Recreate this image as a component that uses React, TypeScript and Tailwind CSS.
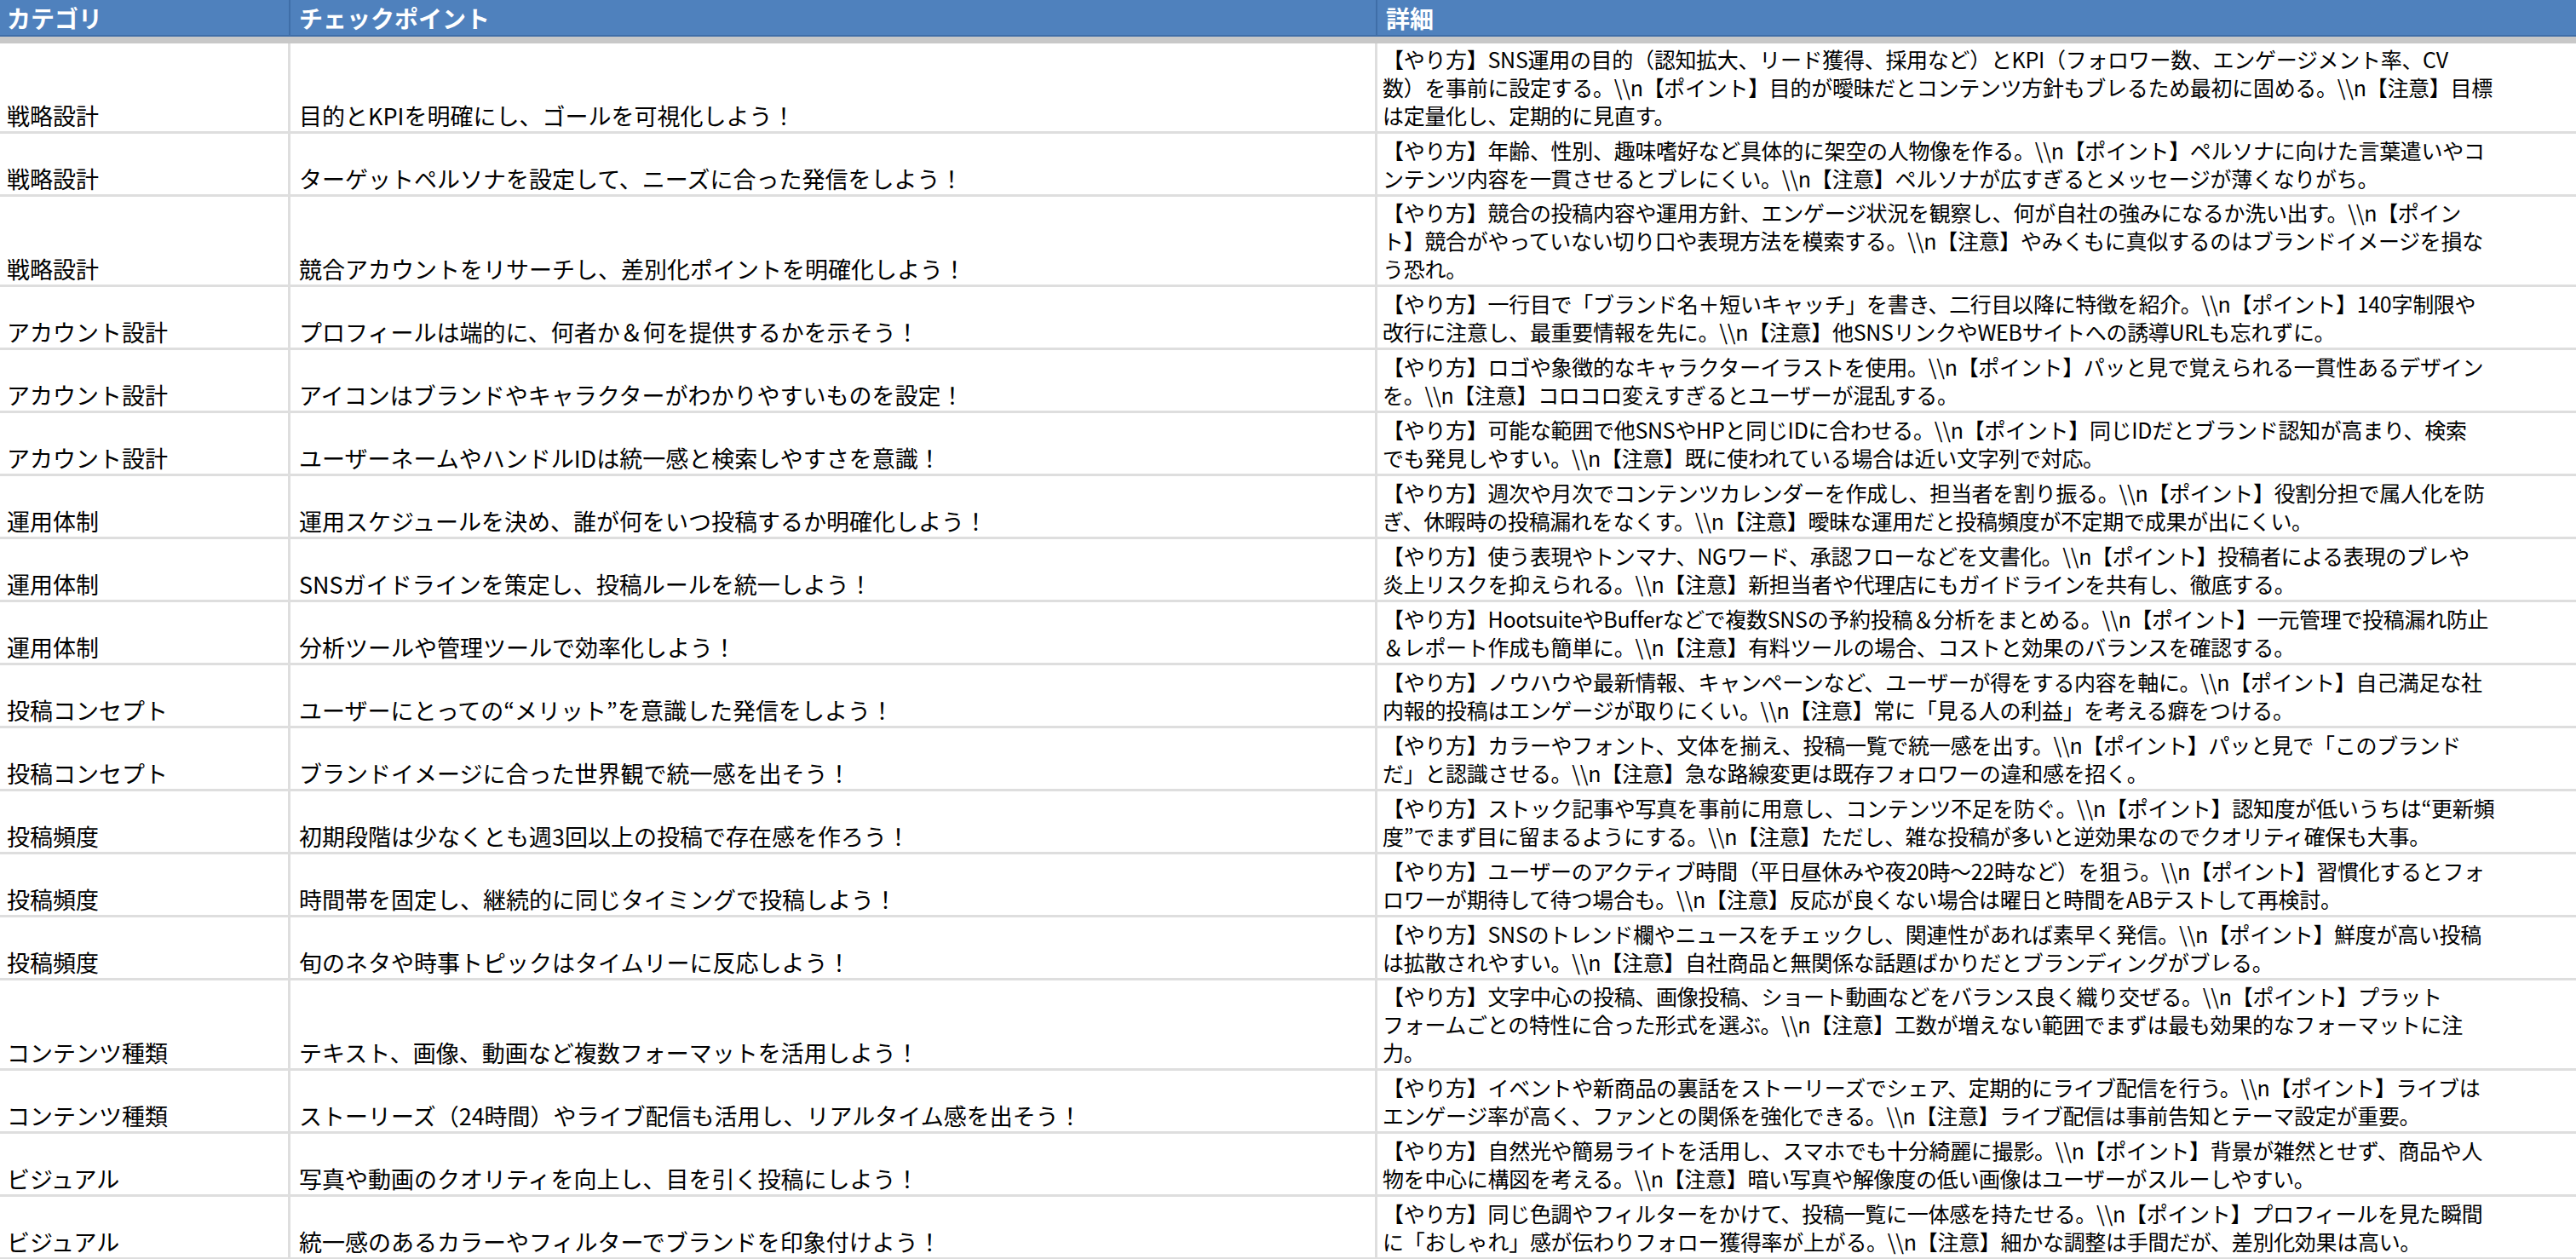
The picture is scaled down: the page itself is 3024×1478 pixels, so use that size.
import React from "react";

type Row = { c: string; p: string; d: string[] };

const rows: Row[] = [
  { c: "戦略設計", p: "目的とKPIを明確にし、ゴールを可視化しよう！", d: ["【やり方】SNS運用の目的（認知拡大、リード獲得、採用など）とKPI（フォロワー数、エンゲージメント率、CV", "数）を事前に設定する。\\\\n【ポイント】目的が曖昧だとコンテンツ方針もブレるため最初に固める。\\\\n【注意】目標", "は定量化し、定期的に見直す。"] },
  { c: "戦略設計", p: "ターゲットペルソナを設定して、ニーズに合った発信をしよう！", d: ["【やり方】年齢、性別、趣味嗜好など具体的に架空の人物像を作る。\\\\n【ポイント】ペルソナに向けた言葉遣いやコ", "ンテンツ内容を一貫させるとブレにくい。\\\\n【注意】ペルソナが広すぎるとメッセージが薄くなりがち。"] },
  { c: "戦略設計", p: "競合アカウントをリサーチし、差別化ポイントを明確化しよう！", d: ["【やり方】競合の投稿内容や運用方針、エンゲージ状況を観察し、何が自社の強みになるか洗い出す。\\\\n【ポイン", "ト】競合がやっていない切り口や表現方法を模索する。\\\\n【注意】やみくもに真似するのはブランドイメージを損な", "う恐れ。"] },
  { c: "アカウント設計", p: "プロフィールは端的に、何者か＆何を提供するかを示そう！", d: ["【やり方】一行目で「ブランド名＋短いキャッチ」を書き、二行目以降に特徴を紹介。\\\\n【ポイント】140字制限や", "改行に注意し、最重要情報を先に。\\\\n【注意】他SNSリンクやWEBサイトへの誘導URLも忘れずに。"] },
  { c: "アカウント設計", p: "アイコンはブランドやキャラクターがわかりやすいものを設定！", d: ["【やり方】ロゴや象徴的なキャラクターイラストを使用。\\\\n【ポイント】パッと見で覚えられる一貫性あるデザイン", "を。\\\\n【注意】コロコロ変えすぎるとユーザーが混乱する。"] },
  { c: "アカウント設計", p: "ユーザーネームやハンドルIDは統一感と検索しやすさを意識！", d: ["【やり方】可能な範囲で他SNSやHPと同じIDに合わせる。\\\\n【ポイント】同じIDだとブランド認知が高まり、検索", "でも発見しやすい。\\\\n【注意】既に使われている場合は近い文字列で対応。"] },
  { c: "運用体制", p: "運用スケジュールを決め、誰が何をいつ投稿するか明確化しよう！", d: ["【やり方】週次や月次でコンテンツカレンダーを作成し、担当者を割り振る。\\\\n【ポイント】役割分担で属人化を防", "ぎ、休暇時の投稿漏れをなくす。\\\\n【注意】曖昧な運用だと投稿頻度が不定期で成果が出にくい。"] },
  { c: "運用体制", p: "SNSガイドラインを策定し、投稿ルールを統一しよう！", d: ["【やり方】使う表現やトンマナ、NGワード、承認フローなどを文書化。\\\\n【ポイント】投稿者による表現のブレや", "炎上リスクを抑えられる。\\\\n【注意】新担当者や代理店にもガイドラインを共有し、徹底する。"] },
  { c: "運用体制", p: "分析ツールや管理ツールで効率化しよう！", d: ["【やり方】HootsuiteやBufferなどで複数SNSの予約投稿＆分析をまとめる。\\\\n【ポイント】一元管理で投稿漏れ防止", "＆レポート作成も簡単に。\\\\n【注意】有料ツールの場合、コストと効果のバランスを確認する。"] },
  { c: "投稿コンセプト", p: "ユーザーにとっての“メリット”を意識した発信をしよう！", d: ["【やり方】ノウハウや最新情報、キャンペーンなど、ユーザーが得をする内容を軸に。\\\\n【ポイント】自己満足な社", "内報的投稿はエンゲージが取りにくい。\\\\n【注意】常に「見る人の利益」を考える癖をつける。"] },
  { c: "投稿コンセプト", p: "ブランドイメージに合った世界観で統一感を出そう！", d: ["【やり方】カラーやフォント、文体を揃え、投稿一覧で統一感を出す。\\\\n【ポイント】パッと見で「このブランド", "だ」と認識させる。\\\\n【注意】急な路線変更は既存フォロワーの違和感を招く。"] },
  { c: "投稿頻度", p: "初期段階は少なくとも週3回以上の投稿で存在感を作ろう！", d: ["【やり方】ストック記事や写真を事前に用意し、コンテンツ不足を防ぐ。\\\\n【ポイント】認知度が低いうちは“更新頻", "度”でまず目に留まるようにする。\\\\n【注意】ただし、雑な投稿が多いと逆効果なのでクオリティ確保も大事。"] },
  { c: "投稿頻度", p: "時間帯を固定し、継続的に同じタイミングで投稿しよう！", d: ["【やり方】ユーザーのアクティブ時間（平日昼休みや夜20時〜22時など）を狙う。\\\\n【ポイント】習慣化するとフォ", "ロワーが期待して待つ場合も。\\\\n【注意】反応が良くない場合は曜日と時間をABテストして再検討。"] },
  { c: "投稿頻度", p: "旬のネタや時事トピックはタイムリーに反応しよう！", d: ["【やり方】SNSのトレンド欄やニュースをチェックし、関連性があれば素早く発信。\\\\n【ポイント】鮮度が高い投稿", "は拡散されやすい。\\\\n【注意】自社商品と無関係な話題ばかりだとブランディングがブレる。"] },
  { c: "コンテンツ種類", p: "テキスト、画像、動画など複数フォーマットを活用しよう！", d: ["【やり方】文字中心の投稿、画像投稿、ショート動画などをバランス良く織り交ぜる。\\\\n【ポイント】プラット", "フォームごとの特性に合った形式を選ぶ。\\\\n【注意】工数が増えない範囲でまずは最も効果的なフォーマットに注", "力。"] },
  { c: "コンテンツ種類", p: "ストーリーズ（24時間）やライブ配信も活用し、リアルタイム感を出そう！", d: ["【やり方】イベントや新商品の裏話をストーリーズでシェア、定期的にライブ配信を行う。\\\\n【ポイント】ライブは", "エンゲージ率が高く、ファンとの関係を強化できる。\\\\n【注意】ライブ配信は事前告知とテーマ設定が重要。"] },
  { c: "ビジュアル", p: "写真や動画のクオリティを向上し、目を引く投稿にしよう！", d: ["【やり方】自然光や簡易ライトを活用し、スマホでも十分綺麗に撮影。\\\\n【ポイント】背景が雑然とせず、商品や人", "物を中心に構図を考える。\\\\n【注意】暗い写真や解像度の低い画像はユーザーがスルーしやすい。"] },
  { c: "ビジュアル", p: "統一感のあるカラーやフィルターでブランドを印象付けよう！", d: ["【やり方】同じ色調やフィルターをかけて、投稿一覧に一体感を持たせる。\\\\n【ポイント】プロフィールを見た瞬間", "に「おしゃれ」感が伝わりフォロー獲得率が上がる。\\\\n【注意】細かな調整は手間だが、差別化効果は高い。"] },
];

const font = { fontFamily: '"Noto Sans CJK JP", "Noto Sans", sans-serif' };

export default function App() {
  return (
    <div className="w-[3024px] h-[1478px] overflow-hidden bg-white text-black" style={font}>
      <div className="flex h-[43px] bg-[#4f81bd] border-b-2 border-[#3f6ea8] text-white font-bold text-[28px] leading-[43px]">
        <div className="w-[341px] shrink-0 px-[8px] border-r-2 border-[#3f6ea8]">カテゴリ</div>
        <div className="w-[1276px] shrink-0 px-[10px] border-r-2 border-[#3f6ea8]">チェックポイント</div>
        <div className="flex-1 px-[10px]">詳細</div>
      </div>
      <div className="h-[8px] bg-[#c8c8c8]" />
      {rows.map((r, i) => (
        <div
          key={i}
          className={`flex border-b-[3px] border-[#dedede] text-[27px] leading-[33px] ${r.d.length === 3 ? "h-[106px]" : "h-[74px]"}`}
        >
          <div className="w-[341px] shrink-0 px-[8px] flex items-end pb-[2px] border-r-[3px] border-[#dedede] whitespace-nowrap">{r.c}</div>
          <div className="w-[1276px] shrink-0 px-[10px] flex items-end pb-[2px] border-r-[3px] border-[#dedede] whitespace-nowrap">{r.p}</div>
          <div className="flex-1 min-w-0 px-[6px] flex flex-col justify-end pb-[2px] overflow-hidden text-[25px] tracking-[-0.3px]">
            {r.d.map((l, j) => (
              <div key={j} className="whitespace-nowrap">{l}</div>
            ))}
          </div>
        </div>
      ))}
    </div>
  );
}
